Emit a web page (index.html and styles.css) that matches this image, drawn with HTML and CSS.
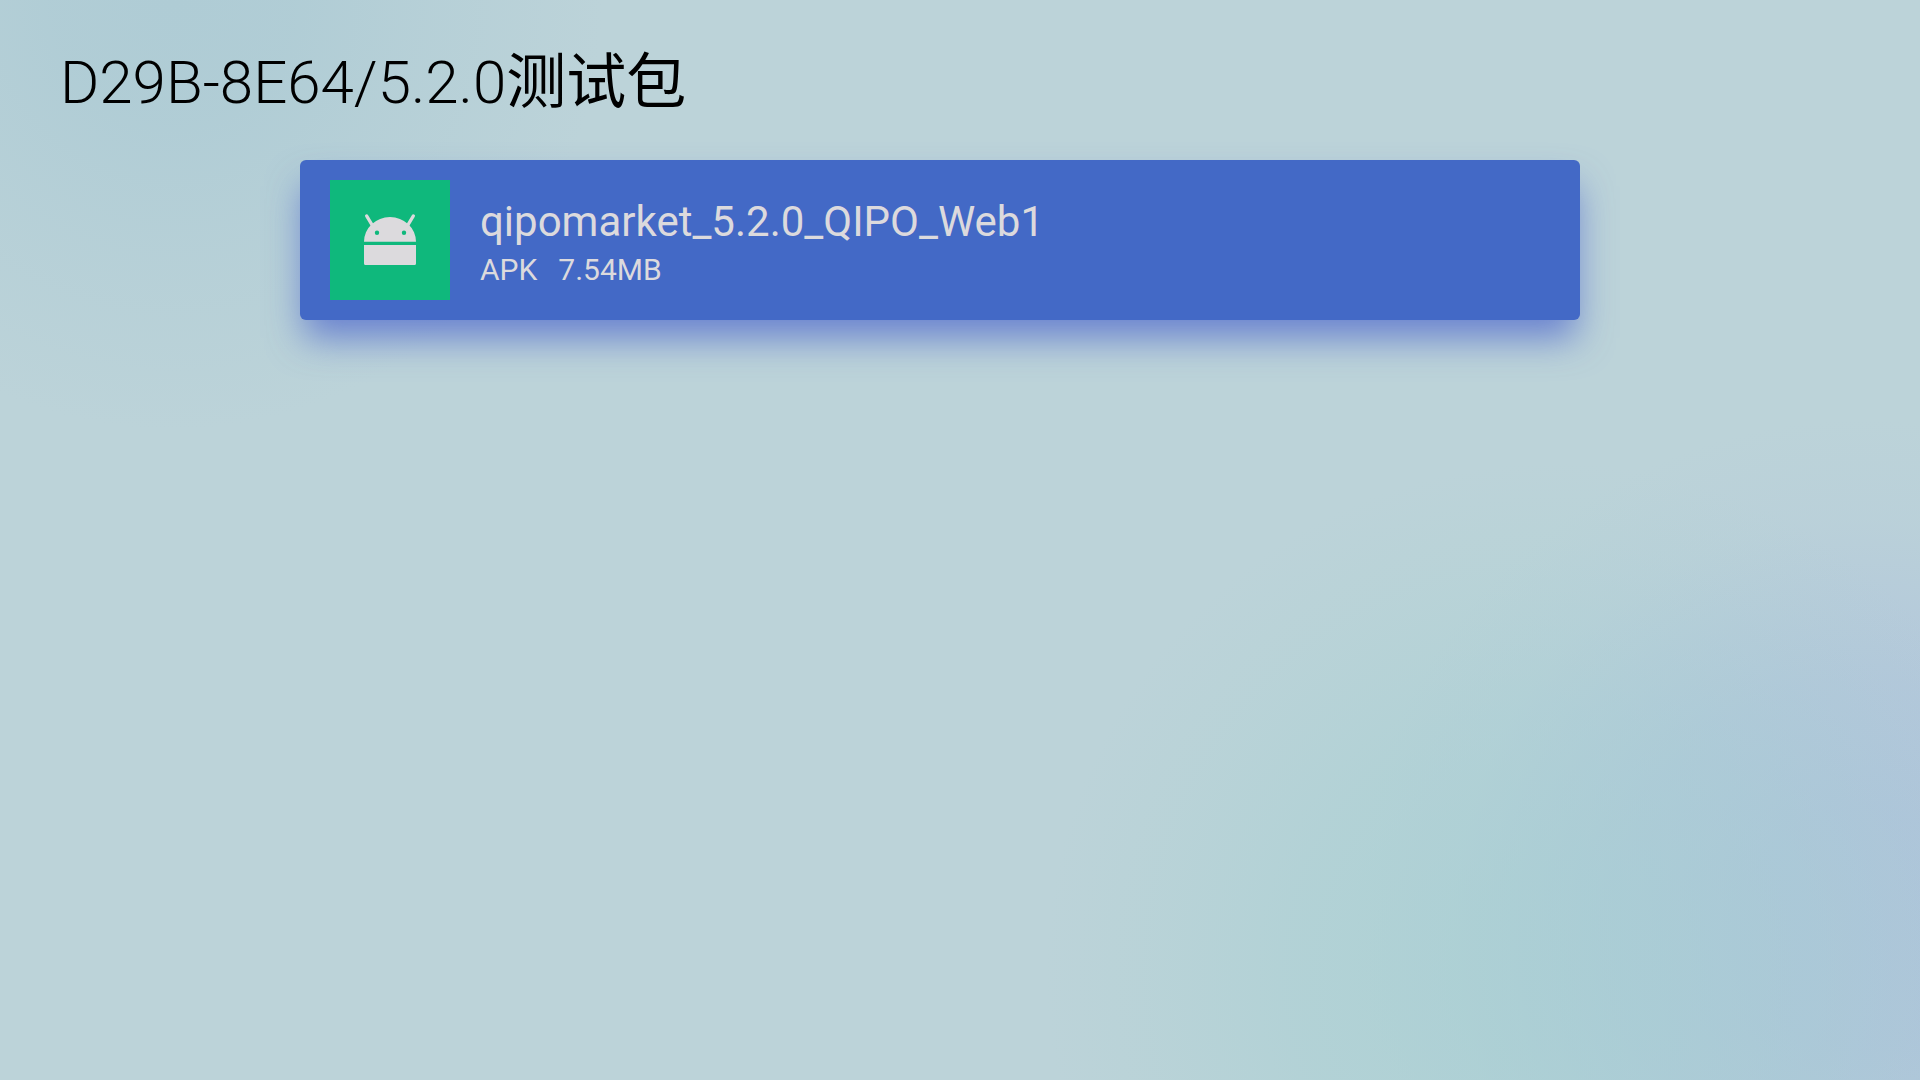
FILE: index.html
```html
<!DOCTYPE html>
<html lang="zh-CN">
<head>
<meta charset="utf-8">
<title>D29B-8E64/5.2.0测试包</title>
<link rel="stylesheet" href="styles.css">
</head>
<body>
<header class="header"><h1 class="path">D29B-8E64/5.2.0<span class="path-cjk">测试包</span></h1></header>
<main class="files">
<button class="file" type="button">
<span class="thumb">
<svg class="android" viewBox="0 0 54 54" aria-hidden="true">
<path d="M3.700 3l6 10M50.300 3l-6 10" stroke="#dcdadd" stroke-width="3.400" stroke-linecap="round"/>
<path fill="#dcdadd" fill-rule="evenodd" d="M1 28.700a26 24.700 0 0 1 52 0zM14 17.500a2.200 2.200 0 1 0 0 4.400a2.200 2.200 0 0 0 0-4.400zM41 17.500a2.200 2.200 0 1 0 0 4.400a2.200 2.200 0 0 0 0-4.400zM1 32h52v18.500a1.500 1.500 0 0 1-1.500 1.500H2.500a1.500 1.500 0 0 1-1.500-1.500z"/>
</svg>
</span>
<span class="info">
<span class="name">qipomarket_5.2.0_QIPO_Web1</span>
<span class="meta"><span>APK</span><span>7.54MB</span></span>
</span>
</button>
</main>
</body>
</html>
```
FILE: styles.css
```css
* { box-sizing: border-box; }
body {
  margin: 0;
  min-height: 100vh;
  font-family: Roboto, "Noto Sans CJK SC", sans-serif;
  background:
    radial-gradient(circle at 81% 90%, #a6d0d2a8 0, #a6d0d2a0 100px, #a6d0d270 260px, #a9d2d020 430px, #a9d2d000 510px),
    radial-gradient(circle at 97% 86%, #acbfdcd8 0, #acbfdcd0 120px, #acbfdc98 250px, #acbfdc20 410px, #acbfdc00 510px),
    radial-gradient(circle at 9% 0, #afccd5 0, #afccd5e0 120px, #afccd580 240px, #afccd500 430px),
    #bcd3d9;
}
.header { padding: 43px 60px 37px; }
.path { margin: 0; font-size: 60px; line-height: 80px; font-weight: 300; color: #000; }
.path-cjk { font-weight: 400; }
.files { padding: 0 340px 0 300px; }
.file {
  display: flex;
  align-items: center;
  gap: 30px;
  width: 100%;
  padding: 20px 30px;
  border: 0;
  border-radius: 6px;
  background: #4369c6;
  color: #dcdadd;
  font: inherit;
  text-align: left;
  box-shadow: 0 22px 36px -4px #4a62ccb8;
}
.thumb { display: grid; place-items: center; width: 120px; height: 120px; background: #0fb87c; }
.android { width: 54px; height: 54px; }
.info { display: flex; flex-direction: column; gap: 3px; padding-top: 7px; }
.name { font-size: 42px; line-height: 50px; }
.meta { display: flex; gap: 21px; font-size: 30px; line-height: 40px; }
```
